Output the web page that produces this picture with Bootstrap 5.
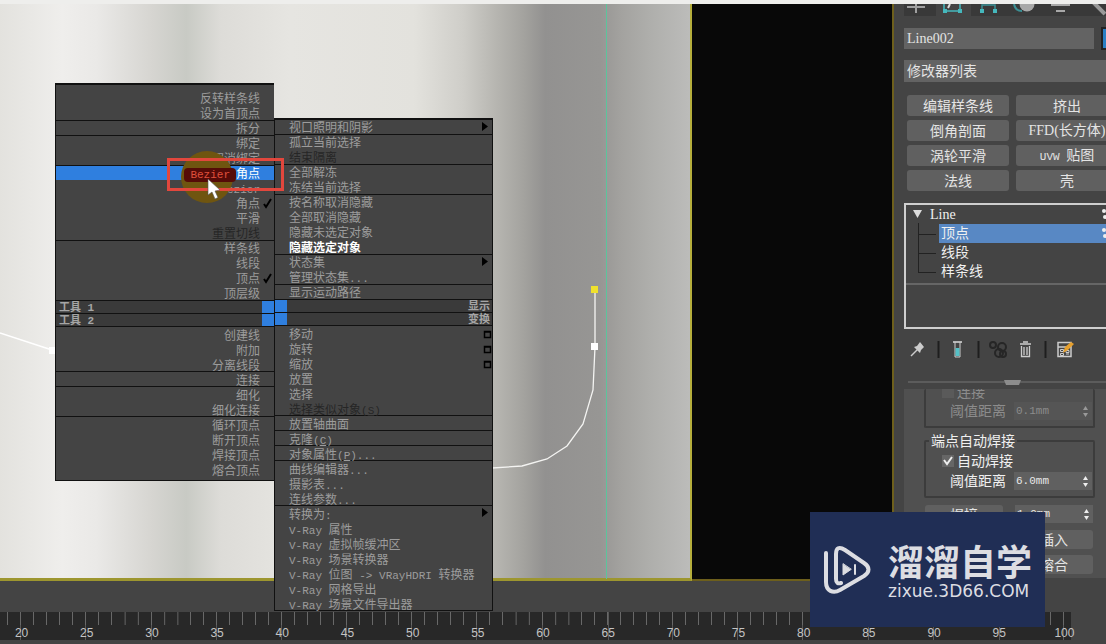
<!DOCTYPE html>
<html lang="zh-CN">
<head>
<meta charset="utf-8">
<meta name="viewport" content="width=device-width, initial-scale=1">
<title>Line002</title>
<link href="https://cdn.jsdelivr.net/npm/bootstrap@5.3.0/dist/css/bootstrap.min.css" rel="stylesheet">
<style>
  body { background:#444; color:#e0e0e0; font-family:"Liberation Sans","Noto Sans CJK SC",sans-serif; font-size:14px; line-height:20px; overflow:hidden; }
  button { font:inherit; color:inherit; }
  .topline { height:4px; background:#eeeeec; }
  .canvas { flex:692 1 0; border-right:2px solid #b5ae3c; border-bottom:3px solid #9d962f;
    background:linear-gradient(90deg,#e3e2de 0,#efeeec 9%,#eae9e7 14%,#d6d5d1 22%,#c8cac4 27%,#dddcd8 32%,#e6e5e1 42%,#e3e2dd 60%,#cfcec9 67%,#b6b5b0 72%,#a3a29e 76%,#929190 79%,#979694 87%,#a3a29f 90%,#aeaeab 94%,#bcbcba 100%); }
  .canvas > svg { position:absolute; left:0; top:0; overflow:visible; }
  .blackview { flex:200 1 0; background:#080808; border-right:2px solid #6d5f1c; border-bottom:2px solid #6d5f1c; }

  /* quad menu */
  .quad { position:absolute; left:55px; top:79px; width:438px; display:grid; grid-template-columns:219px 219px; align-items:start; font-size:12px; line-height:15px; color:#9c9c9c; z-index:2; }
  .quad ul { list-style:none; margin:0; padding:0; box-shadow:inset 0 1px #111; }
  .half { background:#444; border:1px solid #111; }
  .half-l { text-align:right; padding-bottom:4px; border-right:0; }
  .half-r { margin-top:35px; }
  .half-l ul:first-child { padding-top:6px; }
  .quad li button { display:block; width:100%; height:15px; border:0; background:none; padding:2px 14px 0; text-align:inherit; white-space:nowrap; position:relative; }
  .quad .bar ~ ul button { padding-top:3px; }
  .quad button:disabled { color:#262626; }
  .quad .hot { background:#2f7fdf; color:#fff; box-shadow:inset 0 1px #111; }
  .quad .picked { color:#fff; font-weight:700; }
  .quad svg { position:absolute; right:1px; top:3px; }
  .half-r svg { right:4px; }
  .half-r .opt svg { right:0; top:5px; }
  .lt { font-family:"Liberation Mono",monospace; font-size:11px; }
  .bez { position:relative; z-index:3; background:#560b08; color:#e0503c; border-radius:4px; padding:1px 6px; }
  .bar { height:13px; line-height:15px; font-size:11px; font-weight:700; background:#3a3a3a; box-shadow:inset 0 1px #111; display:flex; justify-content:space-between; padding-left:3px; color:#a5a5a5; white-space:pre; }
  .half-r .bar { padding:0 2px 0 0; }
  .bar i { width:12px; margin-top:1px; background:#2f7fdf; }
  .halo { position:absolute; left:126px; top:68px; width:52px; height:52px; border-radius:50%; background:#6f5510; z-index:1; }
  .callout { position:absolute; left:112px; top:75px; width:117px; height:33px; border:3px solid #e2473d; z-index:4; }
  .quad > .pointer { left:152px; right:auto; top:95px; z-index:5; }

  /* command panel */
  .panel { flex:0 0 212px; overflow:hidden; padding-left:10px; background:#444; }
  .panel > svg, .tools > svg { display:block; flex:none; }
  .field { background:#636363; border:0; border-radius:0; color:#e4e4e4; padding:0 3px; min-width:0; }
  .namerow { gap:7px; padding-top:11px; }
  .objname { flex:none; width:190px; height:21px; font-family:"Liberation Serif",serif; font-size:14px; }
  .swatch { width:12px; height:23px; background:#2a7fc4; border:2px solid #222; flex:none; padding:0; }
  .modlist { width:214px; height:22px; appearance:none; font-size:14px; display:block; margin:10px 0 13px; }
  .mods { display:grid; grid-template-columns:102px 102px; gap:4px 7px; padding-left:3px; }
  .mbtn { height:21px; line-height:20px; border:0; border-radius:3px; background:#606060; color:#e4e4e4; padding:0; white-space:nowrap; font-size:14px; }
  .ser { font-family:"Liberation Serif",serif; }
  .stack { border:2px solid #cfcfcf; width:220px; height:126px; line-height:19px; margin-top:12px; }
  .stack button { border:0; background:none; display:block; padding:0 0 0 2px; height:19px; line-height:19px; text-align:left; color:#f0f0f0; }
  .tree { border-bottom:2px solid #666; padding-bottom:2px; position:relative; }
  .tree .ser { margin-left:22px; }
  .tree .kids { margin-left:33px; }
  .tree .kids button { width:100%; }
  .tree .on { background:#5888c4; }
  .tree > svg { position:absolute; left:0; top:0; }
  .tools { height:36px; margin-top:2px; }
  .rollout { background:#505050; width:214px; height:189px; overflow:hidden; }
  .grp { border:2px solid #3c3c3c; border-radius:2px; width:171px; margin:0 0 0 20px; padding:0 0 5px; }
  .grp-top { border-top:0; padding:0 0 5px; }
  fieldset.grp { margin-top:4px; padding:1px 0 5px; }
  .grp legend { font-size:14px; line-height:18px; width:auto; float:none; margin:0 0 0 3px; padding:0 2px; color:#f0f0f0; }
  .chk { display:flex; align-items:center; gap:3px; height:20px; padding-left:16px; color:#f0f0f0; }
  .grp-top .chk { height:6px; margin-bottom:6px; }
  .prm { height:20px; padding-left:24px; display:flex; align-items:center; gap:8px; white-space:nowrap; color:#f0f0f0; }
  .spin { width:78px; height:18px; font-family:"Liberation Mono",monospace; font-size:11px; background:#606060; color:#e8e8e8; padding:0 2px; }
  .spinwrap { position:relative; display:flex; }
  .spinwrap svg { position:absolute; right:3px; top:4px; }
  .dimmed .prm, .dimmed .chk, .dimmed .spin { color:#8c8c8c; }
  .dimmed .spin { background:#555; }
  .tick { appearance:none; width:12px; height:12px; margin:0; background:#666 url("data:image/svg+xml,%3Csvg xmlns='http://www.w3.org/2000/svg' viewBox='0 0 12 12'%3E%3Cpath d='M2 5l3 4 5-7' fill='none' stroke='%23eee' stroke-width='2'/%3E%3C/svg%3E"); }
  .tick:not(:checked) { background:#5a5a5a; }
  .acts { display:grid; grid-template-columns:78px 78px; gap:6px 12px; padding-left:21px; margin-top:7px; }
  .acts .mbtn { height:19px; line-height:18px; }
  .acts .right { grid-column:2; }

  /* time ruler */
  .gap { height:31px; }
  .ruler { overflow:hidden; height:32px; font-size:12px; line-height:14px; color:#c4c4c4; background:#444; }
  .marks { display:grid; grid-template-columns:repeat(17,1fr); margin:0 9px 0 -11px; height:28px; list-style:none; padding:0; }
  .marks li { text-align:center; padding-top:14px; background:
      linear-gradient(90deg,transparent calc(50% - 1px),#686868 0 50%,transparent 0) 0 0/20% 13px repeat-x,
      linear-gradient(90deg,transparent calc(50% - 1px),#585858 0 50%,transparent 0) 0 0/100% 28px no-repeat,#282828; }
  .marks li:last-child { background:
      linear-gradient(90deg,transparent 60%,#444 0),
      linear-gradient(90deg,transparent calc(50% - 1px),#686868 0 50%,transparent 0) 0 0/20% 13px repeat-x,
      linear-gradient(90deg,transparent calc(50% - 1px),#585858 0 50%,transparent 0) 0 0/100% 28px no-repeat,#282828; }

  .brand { position:absolute; right:61px; bottom:17px; width:235px; height:115px; background:#202e55; color:#dcdde2; z-index:10; padding-left:13px; gap:17px; }
  .brand strong { font-size:36px; line-height:36px; display:block; margin-bottom:7px; font-family:"Noto Sans CJK SC",sans-serif; }
  .brand small { font-family:"DejaVu Sans",sans-serif; font-size:17px; line-height:12px; display:block; }
</style>
</head>
<body class="d-flex flex-column vh-100 position-relative">
<div class="topline"></div>
<main class="d-flex flex-grow-1">
  <section class="canvas position-relative" aria-label="视口">
    <svg width="692" height="576" viewBox="0 4 692 576" fill="none" aria-hidden="true">
      <path d="M606.500 4V579" stroke="#5cc49c"/>
      <path d="M0 333L52 350" stroke="#fff" stroke-width="1.500"/>
      <rect x="49" y="347" width="6" height="7" fill="#fff"/>
      <path d="M595 290V347L593 390 583 424 567 446 547 459 522 466 492 468" stroke="#f4f4f2" stroke-width="1.300"/>
      <rect x="591" y="286" width="7" height="7" fill="#f0e12c"/>
      <rect x="591" y="343" width="7" height="7" fill="#fff"/>
    </svg>
    <nav class="quad" aria-label="四元菜单">
      <div class="half half-l">
        <ul><li><button>反转样条线</button></li><li><button>设为首顶点</button></li></ul>
        <ul><li><button>拆分</button></li></ul>
        <ul><li><button>绑定</button></li><li><button>取消绑定</button></li></ul>
        <ul>
          <li><button class="hot"><span class="lt bez">Bezier</span>角点</button></li>
          <li><button><span class="lt">Bezier</span></button></li>
          <li><button>角点<svg width="11" height="11" viewBox="0 0 11 11"><path d="M2 6l2 3 5-8" fill="none" stroke="#000" stroke-width="2"/></svg></button></li>
          <li><button>平滑</button></li>
          <li><button disabled>重置切线</button></li>
        </ul>
        <ul>
          <li><button>样条线</button></li><li><button>线段</button></li>
          <li><button>顶点<svg width="11" height="11" viewBox="0 0 11 11"><path d="M2 6l2 3 5-8" fill="none" stroke="#000" stroke-width="2"/></svg></button></li>
          <li><button>顶层级</button></li>
        </ul>
        <div class="bar"><span>工具<span class="lt"> 1</span></span><i></i></div>
        <div class="bar"><span>工具<span class="lt"> 2</span></span><i></i></div>
        <ul><li><button>创建线</button></li><li><button>附加</button></li><li><button>分离线段</button></li></ul>
        <ul><li><button>连接</button></li></ul>
        <ul><li><button>细化</button></li><li><button>细化连接</button></li></ul>
        <ul><li><button>循环顶点</button></li><li><button>断开顶点</button></li><li><button>焊接顶点</button></li><li><button>熔合顶点</button></li></ul>
      </div>
      <div class="half half-r">
        <ul><li><button>视口照明和阴影<svg width="6" height="9" viewBox="0 0 6 9"><path d="M0 0L6 4.500 0 9z"/></svg></button></li></ul>
        <ul><li><button>孤立当前选择</button></li><li><button disabled>结束隔离</button></li></ul>
        <ul><li><button>全部解冻</button></li><li><button>冻结当前选择</button></li></ul>
        <ul><li><button>按名称取消隐藏</button></li><li><button>全部取消隐藏</button></li><li><button>隐藏未选定对象</button></li><li><button class="picked">隐藏选定对象</button></li></ul>
        <ul><li><button>状态集<svg width="6" height="9" viewBox="0 0 6 9"><path d="M0 0L6 4.500 0 9z"/></svg></button></li><li><button>管理状态集<span class="lt">...</span></button></li></ul>
        <ul><li><button>显示运动路径</button></li></ul>
        <div class="bar"><i></i><span>显示</span></div>
        <div class="bar"><i></i><span>变换</span></div>
        <ul>
          <li><button class="opt">移动<svg width="9" height="9" viewBox="0 0 9 9"><path d="M1.500 1.500h6v6h-6zM1 2h7" fill="none" stroke="#000" stroke-width="1.500"/></svg></button></li>
          <li><button class="opt">旋转<svg width="9" height="9" viewBox="0 0 9 9"><path d="M1.500 1.500h6v6h-6zM1 2h7" fill="none" stroke="#000" stroke-width="1.500"/></svg></button></li>
          <li><button class="opt">缩放<svg width="9" height="9" viewBox="0 0 9 9"><path d="M1.500 1.500h6v6h-6zM1 2h7" fill="none" stroke="#000" stroke-width="1.500"/></svg></button></li>
          <li><button>放置</button></li><li><button>选择</button></li>
          <li><button disabled>选择类似对象<span class="lt">(<u>S</u>)</span></button></li>
        </ul>
        <ul><li><button>放置轴曲面</button></li></ul>
        <ul><li><button>克隆<span class="lt">(<u>C</u>)</span></button></li></ul>
        <ul><li><button>对象属性<span class="lt">(<u>P</u>)...</span></button></li></ul>
        <ul><li><button>曲线编辑器<span class="lt">...</span></button></li><li><button>摄影表<span class="lt">...</span></button></li><li><button>连线参数<span class="lt">...</span></button></li></ul>
        <ul>
          <li><button>转换为<span class="lt">:</span><svg width="6" height="9" viewBox="0 0 6 9"><path d="M0 0L6 4.500 0 9z"/></svg></button></li>
          <li><button><span class="lt">V-Ray </span>属性</button></li>
          <li><button><span class="lt">V-Ray </span>虚拟帧缓冲区</button></li>
          <li><button><span class="lt">V-Ray </span>场景转换器</button></li>
          <li><button><span class="lt">V-Ray </span>位图<span class="lt"> -&gt; VRayHDRI </span>转换器</button></li>
          <li><button><span class="lt">V-Ray </span>网格导出</button></li>
          <li><button><span class="lt">V-Ray </span>场景文件导出器</button></li>
        </ul>
      </div>
      <div class="halo"></div>
      <div class="callout"></div>
      <svg class="pointer" width="16" height="22" viewBox="0 0 16 22"><path d="M1 1v16l4-3 3 7 3-1.500-3-6.500 5-1z" fill="#fff" stroke="#555" stroke-width=".6"/></svg>
    </nav>
  </section>
  <section class="blackview"></section>
  <aside class="panel">
    <svg width="202" height="12" viewBox="904 4 202 12" fill="none" aria-hidden="true">
      <path d="M904 4h202v12H904z" fill="#393939"/><path d="M936 4h35v12h-35z" fill="#444"/>
      <path d="M907 7h18M916 4v9" stroke="#a0a0a0" stroke-width="2"/>
      <path d="M945 11h14M944 4v6M960 4v6" stroke="#45b8bd" stroke-width="1.500"/><path d="M950 4l-2 4" stroke="#ddd" stroke-width="2"/>
      <path d="M943 9h4v4h-4zM958 9h4v4h-4zM980 9h4v4h-4zM993 9h4v4h-4z" fill="#45b8bd"/>
      <path d="M982 9V5h13v4" stroke="#3b9095" stroke-width="1.500"/>
      <path d="M1014 4c1 5 4 7 8 7" stroke="#3b9095" stroke-width="2"/><circle cx="1027" cy="4" r="7.500" fill="#a8a8a8"/>
      <path d="M1051 5h19M1056 11h9" stroke="#a8a8a8" stroke-width="2"/><path d="M1093 2l12 12" stroke="#999" stroke-width="4"/>
    </svg>
    <div class="namerow d-flex align-items-center">
      <input class="field objname" value="Line002" aria-label="对象名称"><button class="swatch" aria-label="颜色"></button>
    </div>
    <select class="field modlist" aria-label="修改器列表"><option>修改器列表</option></select>
    <div class="mods">
      <button class="mbtn">编辑样条线</button><button class="mbtn">挤出</button>
      <button class="mbtn">倒角剖面</button><button class="mbtn"><span class="ser">FFD(</span>长方体<span class="ser">)</span></button>
      <button class="mbtn">涡轮平滑</button><button class="mbtn"><span class="lt">UVW </span>贴图</button>
      <button class="mbtn">法线</button><button class="mbtn">壳</button>
    </div>
    <div class="stack">
      <div class="tree">
        <button class="ser">Line</button>
        <div class="kids"><button class="on">顶点</button><button>线段</button><button>样条线</button></div>
        <svg width="216" height="76" viewBox="0 0 216 76" fill="none">
          <path d="M7 5h9l-4.500 8z" fill="#ddd"/><path d="M12.500 18v49M12 29.500h18M12 48.500h18M12 67.500h18" stroke="#222"/>
          <g fill="#eee"><circle cx="198" cy="6" r="2"/><circle cx="199" cy="12" r="2"/><circle cx="198" cy="25" r="2"/><circle cx="199" cy="31" r="2"/></g>
        </svg>
      </div>
    </div>
    <div class="tools">
      <svg width="202" height="36" viewBox="904 331 202 36" fill="none">
        <path d="M911 356l7-7" stroke="#ccc" stroke-width="1.500"/><path d="M914 347l3-1 3-4 4 5-3 3-1 3z" fill="#ccc"/>
        <path d="M938.500 341v17M978.500 341v17M1045.500 341v17" stroke="#1e1e1e" stroke-width="2"/>
        <path d="M953 342h9" stroke="#ddd" stroke-width="1.500"/><path d="M955 342v15h5v-15" stroke="#ccc"/><path d="M955.500 348h4v8h-4z" fill="#55c0c6"/>
        <g stroke="#262626" stroke-width="2"><circle cx="993" cy="345" r="3"/><circle cx="1002" cy="347" r="4"/><circle cx="999" cy="353" r="4"/><circle cx="1003" cy="354" r="3"/></g>
        <path d="M1020 344h11M1023 342h5M1021.500 346v10.500h8V346M1024 347v8M1027 347v8" stroke="#ccc" stroke-width="1.300"/>
        <path d="M1058 342.500h13v14h-13zM1058 347h13" stroke="#ccc" stroke-width="1.500"/><path d="M1060.500 349.500h3v2h-3zM1066 350.500h3v2h-3zM1060.500 353.500h3v2h-3zM1066 354h3" stroke="#ccc"/><path d="M1063 353l2-6 6-5 3 2-6 6z" fill="#e6a02e"/>
      </svg>
    </div>
    <svg width="202" height="22" viewBox="904 367 202 22" fill="none"><path d="M908 382h198" stroke="#5c5c5c" stroke-width="2"/><path d="M1004 380h17l-2 5h-13z" fill="#8c8c8c"/></svg>
    <div class="rollout">
      <div class="grp grp-top dimmed">
        <label class="chk"><input type="checkbox" class="tick" disabled>连接</label>
        <div class="prm"><label for="t1">阈值距离</label><span class="spinwrap"><input id="t1" class="field spin" value="0.1mm"><svg width="7" height="11" viewBox="0 0 7 11" fill="#999"><path d="M3.500 0L6 4H1zM3.500 11L6 7H1z"/></svg></span></div>
      </div>
      <fieldset class="grp">
        <legend>端点自动焊接</legend>
        <label class="chk"><input type="checkbox" class="tick" checked>自动焊接</label>
        <div class="prm"><label for="t2">阈值距离</label><span class="spinwrap"><input id="t2" class="field spin" value="6.0mm"><svg width="7" height="11" viewBox="0 0 7 11" fill="#eee"><path d="M3.500 0L6 4H1zM3.500 11L6 7H1z"/></svg></span></div>
      </fieldset>
      <div class="acts">
        <button class="mbtn">焊接</button><span class="spinwrap"><input class="field spin" value="1.0mm" aria-label="焊接阈值"><svg width="7" height="11" viewBox="0 0 7 11" fill="#eee"><path d="M3.500 0L6 4H1zM3.500 11L6 7H1z"/></svg></span>
        <button class="mbtn right">插入</button>
        <button class="mbtn right">熔合</button>
      </div>
    </div>
  </aside>
</main>
<div class="gap"></div>
<footer class="ruler">
  <ol class="marks"><li>20</li><li>25</li><li>30</li><li>35</li><li>40</li><li>45</li><li>50</li><li>55</li><li>60</li><li>65</li><li>70</li><li>75</li><li>80</li><li>85</li><li>90</li><li>95</li><li>100</li></ol>
</footer>
<div class="brand d-flex align-items-center">
  <svg width="48" height="50" viewBox="0 0 48 50" fill="none" stroke="#dcdde2" stroke-width="4" stroke-linecap="round" stroke-linejoin="round" aria-hidden="true">
    <path d="M3 8v29c0 9 7 12 14 8l24-14c6-4 6-9 0-13L22 5c-6-4-9-2-9 4v25c0 4 2 5 5 4"/>
    <path d="M20 19v11l8-5.500z" fill="#dcdde2" stroke-width="1"/><path d="M32 20v9" stroke-width="2"/>
  </svg>
  <div><strong>溜溜自学</strong><small>zixue.3D66.COM</small></div>
</div>
<script src="https://cdn.jsdelivr.net/npm/bootstrap@5.3.0/dist/js/bootstrap.bundle.min.js"></script>
</body>
</html>
